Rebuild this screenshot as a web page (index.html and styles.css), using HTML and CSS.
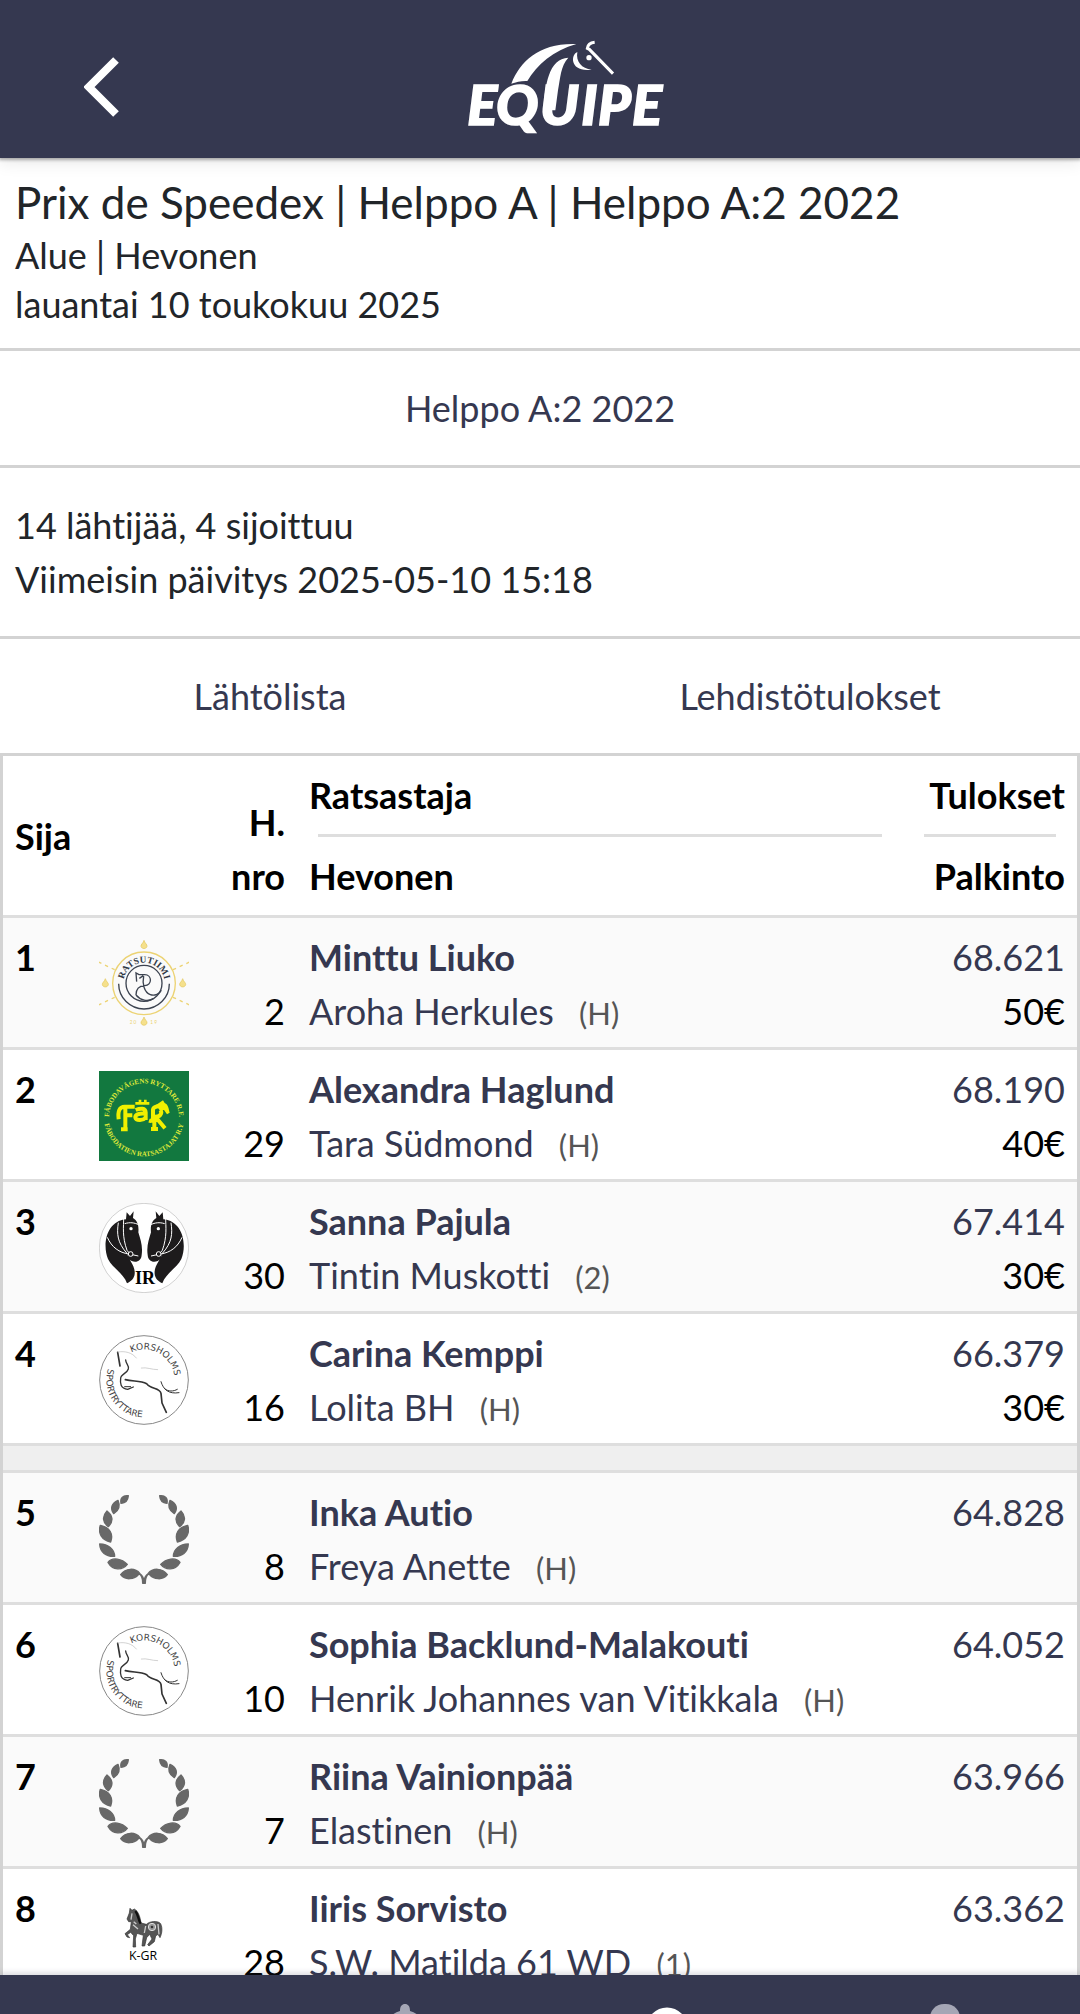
FILE: index.html
```html
<!DOCTYPE html>
<html lang="fi">
<head>
<meta charset="utf-8">
<meta name="viewport" content="width=device-width, initial-scale=1">
<title>Helppo A:2 2022 – Equipe</title>
<link rel="stylesheet" href="styles.css">
</head>
<body>
<svg class="sprite" aria-hidden="true">
  <symbol id="laurel" viewBox="27 38 270 270">
    <g id="branch" fill="#686868" stroke="#686868" stroke-width="4" stroke-linejoin="round">
      <path d="M115 43C98 41 90 51 93 66C107 65 114 57 115 43Z"/>
      <path d="M84 57C64 66 60 82 71 97C88 87 91 73 84 57Z"/>
      <path d="M51 89C36 105 37 122 55 136C71 120 69 103 51 89Z"/>
      <path d="M31 132C23 155 35 176 62 182C71 158 59 137 31 132Z"/>
      <path d="M29 188C30 212 48 227 74 225C73 203 55 189 29 188Z"/>
      <path d="M54 243C67 226 96 232 112 249C97 268 68 268 54 243Z"/>
      <path d="M92 280C107 259 136 259 150 277C158 283 161 290 162 299L163 306H158C158 294 154 281 147 278C133 295 106 298 92 280Z"/>
    </g>
    <use href="#branch" transform="translate(324 0) scale(-1 1)"/>
  </symbol>
  <symbol id="korsholms" viewBox="27 28 270 270">
    <circle cx="162" cy="163" r="133" fill="#fff" stroke="#888" stroke-width="3"/>
    <path id="kors-top" d="M124 80A91 91 0 0 1 248 194" fill="none"/>
    <path id="kors-low" d="M54 129A113 113 0 1 0 270 129" fill="none"/>
    <g class="seal-sans" fill="#444">
      <text><textPath href="#kors-top">KORSHOLMS</textPath></text>
      <text><textPath href="#kors-low">SPORTRYTTARE</textPath></text>
    </g>
    <g fill="none" stroke="#333" stroke-linecap="round" stroke-linejoin="round">
      <path d="M83 80L90 121" stroke-width="5"/>
      <path d="M84 79C105 75 127 81 139 97M154 127C170 124 185 132 203 132" stroke="#bbb" stroke-width="2"/>
      <path d="M107 103C107 114 119 121 115 130C112 142 91 147 92 158C90 172 91 189 113 191L130 184" stroke-width="4"/>
      <path d="M106 162C130 168 151 164 170 174C181 192 209 184 213 203L216 232L229 260" stroke-width="5"/>
      <path d="M213 168C220 192 236 206 267 201M225 190C235 198 250 198 262 191M104 183H122" stroke-width="3"/>
    </g>
  </symbol>
</svg>

<header class="topbar">
  <button class="back" type="button" aria-label="Takaisin">
    <svg viewBox="0 0 36 60"><path d="M32 3L5 30L32 57" fill="none" stroke="#fff" stroke-width="8"/></svg>
  </button>
  <svg class="brand" viewBox="0 0 720 390" role="img" aria-label="Equipe">
    <g fill="#fff">
      <text class="brand-text" y="309" x="82 168 300 424 474 576">EQUIPE</text>
      <path d="M214 185C242 115 300 62 409 66C340 86 291 128 262 177C245 176 229 180 214 185Z"/>
      <path d="M310 265C315 190 326 109 385 107C362 130 361 170 354 205L346 265Z"/>
      <circle cx="447" cy="107" r="8"/>
      <path d="M412 90C390 99 391 152 455 143C425 140 407 119 412 90Z"/>
    </g>
    <path d="M464 61C449 63 443 71 442 79L448 82L519 155" fill="none" stroke="#fff" stroke-width="9"/>
  </svg>
</header>

<main class="content">
  <section class="intro">
    <h1>Prix de Speedex | Helppo A | Helppo A:2 2022</h1>
    <p>Alue | Hevonen</p>
    <p>lauantai 10 toukokuu 2025</p>
  </section>
  <nav class="links"><a href="#results">Helppo A:2 2022</a></nav>
  <section class="status">
    <p>14 lähtijää, 4 sijoittuu</p>
    <p>Viimeisin päivitys 2025-05-10 15:18</p>
  </section>
  <nav class="links"><a href="#start">Lähtölista</a><a href="#press">Lehdistötulokset</a></nav>

  <table class="results" id="results">
    <colgroup><col class="c-place"><col class="c-logo"><col class="c-no"><col><col class="c-score"></colgroup>
    <thead>
      <tr>
        <th>Sija</th><th></th><th class="no">H. nro</th>
        <th>Ratsastaja<hr>Hevonen</th>
        <th class="score">Tulokset<hr>Palkinto</th>
      </tr>
    </thead>
    <tbody>
      <tr>
        <td class="place">1</td>
        <td class="logo"><svg viewBox="28 30 270 270">
          <g fill="none" stroke="#ecd373" stroke-width="4">
            <circle cx="163" cy="163" r="94"/>
            <path stroke-dasharray="10 12" d="M75 122L24 98M250 122L302 98M75 205L24 229M250 205L302 229"/>
          </g>
          <g fill="#f5e08c" stroke="#e3c557" stroke-width="2">
            <path id="drop" d="M163 34C160 44 153 46 154 52C156 61 170 61 172 52C173 46 166 44 163 34Z"/>
            <use href="#drop" y="230"/><use href="#drop" x="-116" y="115"/><use href="#drop" x="116" y="115"/>
          </g>
          <g fill="none" stroke="#3c4350" stroke-width="4">
            <circle cx="163" cy="163" r="54"/>
            <path d="M87 164A76 76 0 0 0 239 164"/>
            <path d="M141 158L139 132L148 137H165C188 137 188 169 165 170C145 171 139 181 139 198M149 148L161 140M162 141C157 165 164 191 182 197C195 202 211 194 215 184M139 198C153 215 174 219 191 209" stroke-width="4"/>
          </g>
          <path id="rats-arc" d="M101 163A62 62 0 0 1 225 163" fill="none"/>
          <text class="seal-serif" fill="#303844"><textPath href="#rats-arc" startOffset="50%">RATSUTIIMI</textPath></text>
          <text class="seal-year" x="120" y="284">2 0</text><text class="seal-year" x="182" y="284">1 9</text>
        </svg></td>
        <td class="no">2</td>
        <td><a class="rider" href="#r1">Minttu Liuko</a><a class="horse" href="#h1">Aroha Herkules</a> <small>(H)</small></td>
        <td class="score"><a href="#s1">68.621</a><span>50€</span></td>
      </tr>
      <tr>
        <td class="place">2</td>
        <td class="logo"><svg viewBox="27 32 270 270">
          <path d="M27 32H297V302H27Z" fill="#12783f"/>
          <path id="far-top" d="M57 174A105 105 0 0 1 267 174" fill="none"/>
          <path id="far-low" d="M41 167A121 121 0 0 0 283 167" fill="none"/>
          <g class="seal-ring" fill="#dfe83a">
            <text><textPath href="#far-top" startOffset="50%">FÄBODAVÄGENS RYTTARE R.F.</textPath></text>
            <text><textPath href="#far-low" startOffset="50%">FÄBODATIEN RATSASTAJAT R.Y</textPath></text>
          </g>
          <g fill="none" stroke="#f1f000" stroke-width="12" stroke-linejoin="round">
            <path d="M134 139H104C88 139 83 153 86 177M106 142V202M93 207H113M106 165H127"/>
            <path d="M137 149C152 143 166 143 167 156V179M166 160C145 158 135 164 136 172C138 181 158 182 166 173"/>
            <path d="M136 129H178M150 118V130M166 118V130" stroke-width="8"/>
            <path d="M177 181C186 184 190 177 189 165V148C190 138 203 138 215 137M190 169C211 171 218 159 211 149M196 169L225 204M183 206H204M193 172V204"/>
          </g>
          <path d="M198 134L219 120L224 128C235 132 236 146 239 157L231 162L222 149L210 151Z" fill="#f1f000"/>
        </svg></td>
        <td class="no">29</td>
        <td><a class="rider" href="#r2">Alexandra Haglund</a><a class="horse" href="#h2">Tara Südmond</a> <small>(H)</small></td>
        <td class="score"><a href="#s2">68.190</a><span>40€</span></td>
      </tr>
      <tr>
        <td class="place">3</td>
        <td class="logo"><svg viewBox="27 39 270 270">
          <circle cx="162" cy="174" r="134" fill="#fff" stroke="#bbb" stroke-width="2"/>
          <g id="ir-horse">
            <path d="M108 88L110 67L120 78L131 64L129 84C143 92 147 108 145 127C151 148 159 167 155 195C154 213 139 219 125 213C115 207 113 193 108 182C113 207 137 226 134 252C133 264 124 274 111 280C101 250 66 233 54 207C36 163 50 93 108 88Z" fill="#1d1b1c"/>
            <path d="M104 101C120 96 133 98 146 104M101 82C101 111 96 139 111 181L121 193M85 98C80 132 82 157 110 189M52 142C65 172 88 188 116 192M122 193L145 198" fill="none" stroke="#fff" stroke-width="3"/>
            <circle cx="123" cy="116" r="5" fill="#fff"/><circle cx="122" cy="192" r="7" fill="#1d1b1c" stroke="#fff" stroke-width="3"/>
          </g>
          <use href="#ir-horse" transform="translate(328 0) scale(-1 1)"/>
          <text class="seal-ir" x="165" y="282">IR</text>
        </svg></td>
        <td class="no">30</td>
        <td><a class="rider" href="#r3">Sanna Pajula</a><a class="horse" href="#h3">Tintin Muskotti</a> <small>(2)</small></td>
        <td class="score"><a href="#s3">67.414</a><span>30€</span></td>
      </tr>
      <tr>
        <td class="place">4</td>
        <td class="logo"><svg><use href="#korsholms"/></svg></td>
        <td class="no">16</td>
        <td><a class="rider" href="#r4">Carina Kemppi</a><a class="horse" href="#h4">Lolita BH</a> <small>(H)</small></td>
        <td class="score"><a href="#s4">66.379</a><span>30€</span></td>
      </tr>
    </tbody>
    <tbody>
      <tr class="divider"><td colspan="5"></td></tr>
    </tbody>
    <tbody>
      <tr>
        <td class="place">5</td>
        <td class="logo"><svg><use href="#laurel"/></svg></td>
        <td class="no">8</td>
        <td><a class="rider" href="#r5">Inka Autio</a><a class="horse" href="#h5">Freya Anette</a> <small>(H)</small></td>
        <td class="score"><a href="#s5">64.828</a></td>
      </tr>
      <tr>
        <td class="place">6</td>
        <td class="logo"><svg><use href="#korsholms"/></svg></td>
        <td class="no">10</td>
        <td><a class="rider" href="#r6">Sophia Backlund-Malakouti</a><a class="horse" href="#h6">Henrik Johannes van Vitikkala</a> <small>(H)</small></td>
        <td class="score"><a href="#s6">64.052</a></td>
      </tr>
      <tr>
        <td class="place">7</td>
        <td class="logo"><svg><use href="#laurel"/></svg></td>
        <td class="no">7</td>
        <td><a class="rider" href="#r7">Riina Vainionpää</a><a class="horse" href="#h7">Elastinen</a> <small>(H)</small></td>
        <td class="score"><a href="#s7">63.966</a></td>
      </tr>
      <tr>
        <td class="place">8</td>
        <td class="logo"><svg viewBox="28 -3 270 270">
          <path d="M119 66L121 52L127 58L134 54C148 62 152 82 154 96L170 100C180 90 205 88 213 98C220 113 216 130 211 140L205 130L198 135L194 152L178 165L174 161L187 144L180 130L171 140L165 165H157L161 133L142 127L137 144L138 168H130L132 134L123 124L113 131L120 140L112 138L106 128L122 115L125 92L117 92L112 84Z" fill="#555" stroke="#333" stroke-width="2"/>
          <path d="M137 60C147 72 146 88 153 98" fill="none" stroke="#111" stroke-width="7"/>
          <path d="M127 67L124 86M130 101L145 114M168 105L164 126M205 99L208 130M132 92L140 99" fill="none" stroke="#ccc" stroke-width="4"/>
          <circle cx="187" cy="108" r="11" fill="#999" stroke="#ddd" stroke-width="3"/>
          <circle cx="187" cy="108" r="4" fill="#333"/>
          <text class="seal-kgr" x="160" y="208">K-GR</text>
        </svg></td>
        <td class="no">28</td>
        <td><a class="rider" href="#r8">Iiris Sorvisto</a><a class="horse" href="#h8">S.W. Matilda 61 WD</a> <small>(1)</small></td>
        <td class="score"><a href="#s8">63.362</a></td>
      </tr>
    </tbody>
  </table>
</main>

<nav class="tabbar">
  <a href="#home" aria-label="Etusivu"></a>
  <a href="#alerts" aria-label="Ilmoitukset"><svg viewBox="0 0 60 60"><path d="M30 0C33 0 35 2 35 7C45 10 50 17 50 29V45H10V29C10 17 15 10 25 7C25 2 27 0 30 0Z" fill="#a5a6b5"/></svg></a>
  <a href="#search" aria-label="Haku"><svg viewBox="0 0 60 60"><circle cx="22" cy="24" r="17" fill="none" stroke="#fff" stroke-width="7"/><path d="M34 36L54 56" stroke="#fff" stroke-width="8"/></svg></a>
  <a href="#profile" aria-label="Profiili"><svg viewBox="0 0 60 60"><rect x="15" y="0" width="30" height="34" rx="14" fill="#a5a6b5"/></svg></a>
</nav>
</body>
</html>
```
FILE: styles.css
```css
* { box-sizing: border-box; }

body {
  margin: 0;
  height: 100vh;
  display: flex;
  flex-direction: column;
  overflow: hidden;
  background: #fff;
  color: #212529;
  font: 36px/54px Lato, "Open Sans", sans-serif;
  font-variant-ligatures: none;
}

h1, p { margin: 0; }
a { color: #353850; text-decoration: none; }
.sprite { position: absolute; width: 0; height: 0; }

.topbar {
  flex: none;
  display: grid;
  grid-template-columns: 1fr 280px 1fr;
  align-items: center;
  height: 158px;
  padding-top: 15px;
  background: #353850;
  box-shadow: 0 1px 3px 1px rgba(0, 0, 0, .3), 0 4px 16px rgba(0, 0, 0, .1);
  position: relative;
}
.back {
  width: 36px;
  height: 60px;
  margin-left: 84px;
  padding: 0;
  border: 0;
  background: none;
}
.back svg { display: block; }
.brand { display: block; justify-self: end; width: 240px; height: 130px; }
.brand-text {
  font: italic 900 168px Lato, sans-serif;
  stroke: #fff;
  stroke-width: 5px;
}

.content {
  flex: 1;
  min-height: 0;
  overflow-y: auto;
  scrollbar-width: none;
}

.intro {
  padding: 16px 15px 19px;
  border-bottom: 3px solid #d3d3d3;
  line-height: 49px;
}
.intro h1 { font-size: 44px; line-height: 57px; font-weight: 400; }

.links {
  display: flex;
  padding: 30px 0;
  border-bottom: 3px solid #d3d3d3;
}
.links a { flex: 1; text-align: center; }
.status { padding: 30px 15px; border-bottom: 3px solid #d3d3d3; }

.results {
  width: 100%;
  table-layout: fixed;
  border-spacing: 0;
  border: solid #d3d3d3;
  border-width: 0 3px;
  color: #000;
}
.c-place { width: 84px; }
.c-logo { width: 114px; }
.c-no { width: 96px; }
.c-score { width: 174px; }

.results th, .results td {
  padding: 12px 12px 9px;
  border-bottom: 3px solid #dedede;
  text-align: left;
  vertical-align: top;
}
.results th { padding: 12px; vertical-align: middle; }
.results hr {
  height: 3px;
  margin: 12px 9px;
  border: 0;
  background: #dedede;
}
.results tbody tr:nth-child(odd) { background: #fafafa; }
.results .no { text-align: right; vertical-align: bottom; }
.results .score { text-align: right; }
.results .place { font-weight: 700; }
.results .logo { vertical-align: middle; }
.logo svg { display: block; width: 90px; height: 90px; }
.rider { display: block; font-weight: 700; }
.horse { margin-right: 16px; }
.results small { font-size: 31px; line-height: 31px; color: #555; }
.score a, .score span { display: block; }
.results tbody tr.divider { background: #efefef; }
.results .divider td { height: 27px; padding: 0; }

.seal-sans { font: 27px "DejaVu Sans", sans-serif; }
.seal-serif { font: 700 28px "Liberation Serif", serif; text-anchor: middle; }
.seal-ring { font: 700 21px "Liberation Serif", serif; text-anchor: middle; }
.seal-year { font: 14px Lato, sans-serif; fill: #ecd373; }
.seal-ir { font: 700 54px "Liberation Serif", serif; text-anchor: middle; }
.seal-kgr { font: 37px "Open Sans", sans-serif; text-anchor: middle; }

.tabbar {
  flex: none;
  display: flex;
  height: 39px;
  padding-top: 29px;
  overflow: hidden;
  background: #353850;
  box-shadow: 0 -2px 6px rgba(53, 56, 80, .2);
  position: relative;
}
.tabbar a { flex: 1; display: flex; justify-content: center; }
.tabbar svg { width: 60px; height: 60px; }
```
